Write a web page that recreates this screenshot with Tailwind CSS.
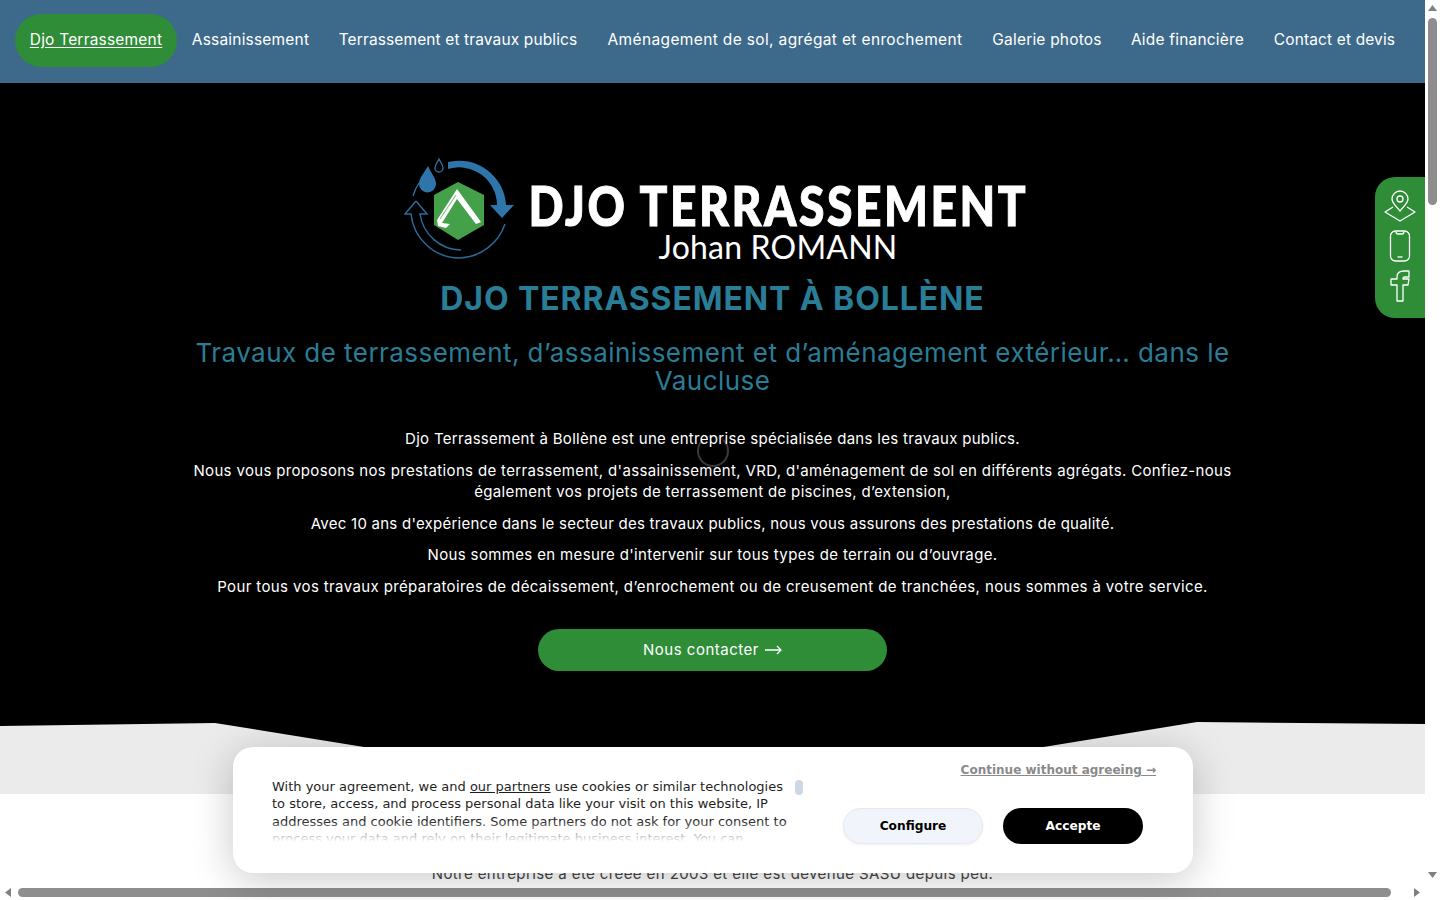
<!DOCTYPE html>
<html lang="fr">
<head>
  <meta charset="UTF-8" />
  <title>Djo Terrassement</title>
  <script src="https://cdn.jsdelivr.net/npm/@tailwindcss/browser@4"></script>
</head>
<body class="relative w-[1440px] h-[900px] overflow-hidden bg-white font-['Inter',sans-serif]">

  <div class="flex h-[885px]">
    <!-- Page -->
    <div class="w-[1425px] h-[885px] overflow-hidden flex flex-col">

      <!-- Nav -->
      <nav class="h-[83px] shrink-0 bg-[#3d6a8a] pl-[15px] pt-[14px] flex items-start text-[15.5px] tracking-[0.2px] text-white whitespace-nowrap">
        <a class="h-[53px] w-[162px] pb-[2px] flex items-center justify-center rounded-[27px] bg-[#2f8c37] underline underline-offset-2">Djo Terrassement</a>
        <a class="h-[53px] w-[147px] pb-[2px] flex items-center justify-center">Assainissement</a>
        <a class="h-[53px] w-[268px] pb-[2px] flex items-center justify-center tracking-[0.12px]">Terrassement et travaux publics</a>
        <a class="h-[53px] w-[386px] pb-[2px] flex items-center justify-center tracking-[0.36px]">Aménagement de sol, agrégat et enrochement</a>
        <a class="h-[53px] w-[138px] pb-[2px] flex items-center justify-center">Galerie photos</a>
        <a class="h-[53px] w-[143px] pb-[2px] flex items-center justify-center">Aide financière</a>
        <a class="h-[53px] w-[151px] pb-[2px] flex items-center justify-center tracking-[0.13px]">Contact et devis</a>
      </nav>

      <!-- Hero -->
      <section class="relative h-[711px] shrink-0 bg-black text-white">
        <!-- loader ring, sits under the text -->
        <div class="absolute left-[697px] top-[352px] w-[32px] h-[32px] rounded-full border-[2px] border-[#3a3a3a] border-t-[#161616]"></div>

        <!-- Logo -->
        <div class="pt-[72px] pl-[404px] flex h-[195px]">
          <svg width="112" height="110" viewBox="404 155 112 110" fill="none" class="shrink-0">
            <path d="M448 162 A47 47 0 0 1 506 205 L514 205 L502 218 L490 205 L497 205 A38 38 0 0 0 448 169Z" fill="#2e75ab"/>
            <path d="M428 166 C424 173 419 178 419 184 A8.5 8.5 0 0 0 436 184 C436 178 431 173 428 166Z" fill="#2e75ab"/>
            <path d="M439 159 C437 163 435 165 435 168 A4 4 0 0 0 443 168 C443 165 441 163 439 159Z" stroke="#2e75ab" stroke-width="1.3"/>
            <path d="M419 183 Q415 189 413 196" stroke="#2e75ab" stroke-width="1.3"/>
            <path d="M458 182 L484 195 V225 L458 240 L434 225 V195Z" fill="#45a04a"/>
            <path d="M437 220 L457 189 L481 222 L476 224 L457 199 L442 223 L450 224 L446 228 L438 226Z" fill="#fff"/>
            <path d="M440 219 L456 195" stroke="#45a04a" stroke-width="0.8"/>
            <path d="M416 201 L405 214 H411 A49 49 0 0 0 460 258 A50 50 0 0 0 505 224" stroke="#2a6a9a" stroke-width="1.5"/>
            <path d="M416 201 L427 214 H420 A42 42 0 0 0 461 250" stroke="#2a6a9a" stroke-width="1.5"/>
          </svg>
          <div class="ml-[12px] w-[500px] flex flex-col items-center">
            <div class="font-['Lato',sans-serif] font-black text-[55px] leading-[40px] mt-[30px] tracking-[3px] whitespace-nowrap scale-x-[0.84] [-webkit-text-stroke:1px_white]">DJO TERRASSEMENT</div>
            <div class="font-['Lato',sans-serif] text-[32px] leading-[32px] mt-[6px] tracking-[0.2px] whitespace-nowrap">Johan ROMANN</div>
          </div>
        </div>

        <h1 class="mt-[1px] text-center text-[#2a7d96] font-bold text-[32px] leading-[40px] tracking-[0.9px]">DJO TERRASSEMENT À BOLLÈNE</h1>
        <h2 class="mt-[20px] mx-auto w-[1050px] text-center text-[#2a7d96] text-[26px] leading-[28px] tracking-[0.45px]">Travaux de terrassement, d’assainissement et d’aménagement extérieur… dans le Vaucluse</h2>

        <div class="relative mt-[33.25px] mx-auto w-[1060px] text-center text-[15px] leading-[21px] tracking-[0.36px] flex flex-col gap-[10.7px]">
          <p class="tracking-[0.3px]">Djo Terrassement à Bollène est une entreprise spécialisée dans les travaux publics.</p>
          <p class="tracking-[0.34px]">Nous vous proposons nos prestations de terrassement, d'assainissement, VRD, d'aménagement de sol en différents agrégats. Confiez-nous également vos projets de terrassement de piscines, d’extension,</p>
          <p class="tracking-[0.25px]">Avec 10 ans d'expérience dans le secteur des travaux publics, nous vous assurons des prestations de qualité.</p>
          <p>Nous sommes en mesure d'intervenir sur tous types de terrain ou d’ouvrage.</p>
          <p class="tracking-[0.38px]">Pour tous vos travaux préparatoires de décaissement, d’enrochement ou de creusement de tranchées, nous sommes à votre service.</p>
        </div>

        <a class="mt-[32px] mx-auto w-[349px] h-[42px] rounded-[21px] bg-[#2f8c37] flex items-center justify-center gap-[6px] text-[15px] tracking-[0.5px]">
          Nous contacter
          <svg width="17" height="10" viewBox="0 0 17 10" fill="none" stroke="#fff" stroke-width="1.3"><path d="M0 5H16M12 1L16 5L12 9"/></svg>
        </a>

        <!-- slanted divider -->
        <svg class="absolute left-0 bottom-0" width="1425" height="72" viewBox="0 722 1425 72">
          <path d="M0 726 L215 723 L705 802 L1197 722 L1425 724 V794 H0Z" fill="#ebebeb"/>
        </svg>
      </section>

      <!-- Next section -->
      <section class="bg-white pt-[69px] text-center text-[15px] leading-[21px] tracking-[0.4px] text-[#444]">
        <p>Notre entreprise a été créée en 2003 et elle est devenue SASU depuis peu.</p>
      </section>
    </div>

    <!-- Vertical scrollbar -->
    <div class="relative w-[15px] h-[885px] bg-white">
      <svg class="absolute left-[3px] top-[5px]" width="9" height="6"><path d="M4.5 0L9 6H0Z" fill="#7f7f7f"/></svg>
      <div class="absolute left-[3px] top-[18px] w-[9px] h-[187px] rounded-[5px] bg-[#8e8c8c]"></div>
      <svg class="absolute left-[3px] top-[872px]" width="9" height="6"><path d="M0 0H9L4.5 6Z" fill="#7f7f7f"/></svg>
    </div>
  </div>

  <!-- Horizontal scrollbar -->
  <div class="relative h-[15px] bg-white">
    <svg class="absolute left-[5px] top-[3px]" width="6" height="9"><path d="M6 0V9L0 4.5Z" fill="#7f7f7f"/></svg>
    <div class="absolute left-[18px] top-[3px] w-[1373px] h-[9px] rounded-[5px] bg-[#8e8e8e]"></div>
    <svg class="absolute left-[1414px] top-[3px]" width="6" height="9"><path d="M0 0L6 4.5L0 9Z" fill="#7f7f7f"/></svg>
  </div>

  <!-- Side widget -->
  <div class="absolute left-[1375px] top-[177px] w-[50px] h-[141px] rounded-l-[20px] bg-[#2f8c37]">
    <svg width="50" height="141" viewBox="1375 177 50 141" fill="none" stroke="#fff" stroke-width="1.3" stroke-linejoin="round">
      <path d="M1400 211 C1396 206 1392 203 1392 199 A8 8 0 0 1 1408 199 C1408 203 1404 206 1400 211Z"/>
      <circle cx="1400" cy="199" r="3"/>
      <path d="M1393 207 L1385 212 L1400 221 L1415 212 L1407 207"/>
      <rect x="1390.5" y="231" width="19" height="30" rx="5"/>
      <path d="M1396 231.5 Q1396 234 1398 234 H1402 Q1404 234 1404 231.5"/>
      <path d="M1397.5 257 H1402.5"/>
      <path d="M1397 301 V285 H1391 V279 H1397 V277 Q1397 271 1404 271 H1409 V277 H1405 Q1403 277 1403 279 H1409 L1408 285 H1403 V301Z"/>
    </svg>
  </div>

  <!-- Cookie banner -->
  <div class="absolute left-[233px] top-[747px] w-[960px] h-[126px] rounded-[20px] bg-white shadow-[0_6px_40px_rgba(0,0,0,0.22)] flex font-['DejaVu_Sans',sans-serif]">
    <div class="relative ml-[39px] mt-[31px] w-[531px] h-[64px] overflow-hidden">
      <p class="w-[518px] text-[13px] leading-[17.4px] text-[#1f1f1f]">With your agreement, we and <a class="underline">our partners</a> use cookies or similar technologies to store, access, and process personal data like your visit on this website, IP addresses and cookie identifiers. Some partners do not ask for your consent to process your data and rely on their legitimate business interest. You can</p>
      <div class="absolute left-0 bottom-0 w-[518px] h-[22px] bg-gradient-to-b from-white/0 to-white"></div>
      <div class="absolute left-[523px] top-[2px] w-[8px] h-[15px] rounded-[4px] bg-[#cdd7e6]"></div>
    </div>
    <div class="flex-1 pr-[37px] pt-[16px] flex flex-col items-end">
      <a class="text-[12px] leading-[15px] font-bold text-[#8a8a8a] underline">Continue without agreeing →</a>
      <div class="mt-[30px] mr-[13px] flex gap-[20px] text-[12.2px] font-bold">
        <button class="w-[140px] h-[36px] rounded-[18px] bg-[#f1f4fa] border border-[#e4e8f0] text-black shadow-[0_1px_3px_rgba(0,0,0,0.06)]">Configure</button>
        <button class="w-[140px] h-[36px] rounded-[18px] bg-black text-white">Accepte</button>
      </div>
    </div>
  </div>

</body>
</html>
